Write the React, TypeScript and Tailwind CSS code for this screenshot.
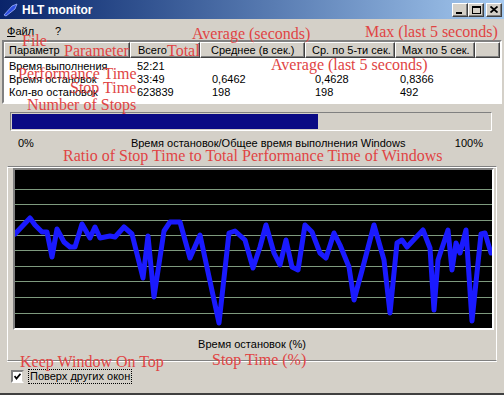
import React from 'react';

// trace of the stop-time graph, in window pixels
const trace: [number, number][] = [
  [13, 234], [28, 218], [33, 225], [40, 232], [45, 232], [50, 257], [55, 229], [62, 242],
  [68, 247], [73, 247], [80, 224], [88, 238], [93, 227], [98, 238], [108, 236], [113, 237],
  [122, 227], [130, 234], [141, 278], [146, 236], [152, 297], [162, 231], [168, 222],
  [178, 222], [188, 258], [198, 235], [217, 323], [227, 233], [233, 231], [243, 240],
  [251, 268], [258, 247], [264, 225], [272, 253], [278, 265], [284, 240], [290, 267],
  [296, 270], [303, 225], [310, 232], [318, 253], [324, 258], [332, 233], [338, 245],
  [347, 267], [352, 300], [362, 263], [372, 225], [382, 260], [388, 313], [395, 243],
  [400, 240], [405, 247], [421, 230], [428, 248], [432, 310], [436, 260], [446, 230],
  [450, 270], [454, 243], [458, 253], [464, 230], [470, 321], [479, 234], [483, 233],
  [489, 253],
];

const chartPoints = trace.map(([x, y]) => `${x - 13},${y - 170}`).join(' ');
const gridLines = [19, 34, 50, 65, 80, 96, 111, 127, 143];

const columns = [
  { title: 'Параметр', w: 'w-[126px]', pl: 'pl-[4px]' },
  { title: 'Всего', w: 'w-[70px]', pl: 'pl-[7px]' },
  { title: 'Среднее (в сек.)', w: 'w-[105px]', pl: 'pl-[10px]' },
  { title: 'Ср. по 5-ти сек.', w: 'w-[90px]', pl: 'pl-[6px]' },
  { title: 'Max по 5 сек.', w: 'w-[80px]', pl: 'pl-[6px]' },
];

const rows = [
  ['Время выполнения', '52:21', '', '', ''],
  ['Время остановок', '33:49', '0,6462', '0,4628', '0,8366'],
  ['Кол-во остановок', '623839', '198', '198', '492'],
];

const rowPads = ['pl-[5px]', 'pl-[7px]', 'pl-[12px]', 'pl-[10px]', 'pl-[5px]'];

const raised =
  'bg-[#d4d0c8] border border-t-white border-l-white border-r-[#404040] border-b-[#404040] shadow-[inset_-1px_-1px_#808080]';

const notes = [
  { text: 'File', cls: 'left-[22px] top-[33px]' },
  { text: 'Average (seconds)', cls: 'left-[192px] top-[26px] text-[15px]' },
  { text: 'Max (last 5 seconds)', cls: 'left-[365px] top-[24px] text-[15.5px]' },
  { text: 'Parameter', cls: 'left-[64px] top-[43px]' },
  { text: 'Total', cls: 'left-[167px] top-[43px] text-[14.5px]' },
  { text: 'Average (last 5 seconds)', cls: 'left-[271px] top-[57px]' },
  { text: 'Performance Time', cls: 'left-[18px] top-[66px] text-[15px]' },
  { text: 'Stop Time', cls: 'left-[70px] top-[80px]' },
  { text: 'Number of Stops', cls: 'left-[27px] top-[97px]' },
  { text: 'Ratio of Stop Time to Total Performance Time of Windows', cls: 'left-[63px] top-[148px]' },
  { text: 'Keep Window On Top', cls: 'left-[20px] top-[354px]' },
  { text: 'Stop Time (%)', cls: 'left-[212px] top-[352px]' },
];

const TitleButton: React.FC<{ kind: 'min' | 'max' | 'close' }> = ({ kind }) => (
  <div className={`${raised} w-[16px] h-[14px] flex items-center justify-center`}>
    {kind === 'min' && <div className="w-[6px] h-[2px] bg-black mt-[6px] mr-[2px]" />}
    {kind === 'max' && <div className="w-[9px] h-[8px] border border-black border-t-2" />}
    {kind === 'close' && (
      <svg width="8" height="7" viewBox="0 0 8 7">
        <path d="M0.5 0.5 L7.5 6.5 M7.5 0.5 L0.5 6.5" stroke="black" strokeWidth="1.8" />
      </svg>
    )}
  </div>
);

export default function App() {
  return (
    <div className="relative w-[504px] h-[395px] overflow-hidden bg-[#d4d0c8] font-['Liberation_Sans',Arial,sans-serif] text-[11px] text-black border-b-2 border-b-[#404040]">
      {/* title bar */}
      <div className="h-[19px] bg-linear-to-r from-[#0a246a] to-[#a6caf0] flex items-center pl-[3px] pr-[2px]">
        <svg width="16" height="14" viewBox="0 0 16 14" className="mr-[3px]">
          <path d="M1 12 L9 3 L14 1 L12 6 L3 13 Z" fill="#2f4fe0" stroke="#9fb4ff" strokeWidth="0.8" />
        </svg>
        <span className="text-white font-bold text-[12px] leading-none">HLT monitor</span>
        <div className="ml-auto flex items-center">
          <TitleButton kind="min" />
          <TitleButton kind="max" />
          <div className="w-[2px]" />
          <TitleButton kind="close" />
        </div>
      </div>

      {/* menu */}
      <div className="h-[21px] flex items-center gap-[21px] pl-[7px] pt-[3px]">
        <span>
          <span className="underline">Ф</span>айл
        </span>
        <span>?</span>
      </div>

      {/* list view */}
      <div className="mx-[2px] h-[64px] bg-white border-2 border-t-[#808080] border-l-[#808080] border-b-white border-r-white">
        <div className="flex h-[16px]">
          {columns.map((c) => (
            <div key={c.title} className={`${raised} ${c.w} ${c.pl} h-full flex items-center whitespace-nowrap`}>
              {c.title}
            </div>
          ))}
          <div className={`${raised} flex-1 h-full`} />
        </div>
        <div className="pt-[2px]">
          {rows.map((r) => (
            <div key={r[0]} className="flex h-[13px] leading-[13px]">
              {r.map((cell, i) => (
                <div key={i} className={`${columns[i].w} ${rowPads[i]} whitespace-nowrap`}>
                  {cell}
                </div>
              ))}
            </div>
          ))}
        </div>
      </div>

      {/* ratio bar */}
      <div className="ml-[10px] mt-[8px] w-[482px] h-[19px] border border-t-[#808080] border-l-[#808080] border-b-white border-r-white p-[1px]">
        <div className="h-full w-[306px] bg-[#0a0a84]" />
      </div>
      <div className="h-[14px] mt-[5px] flex items-center pr-[21px]">
        <span className="ml-[18px]">0%</span>
        <span className="ml-[97px]">Время остановок/Общее время выполнения Windows</span>
        <span className="ml-auto">100%</span>
      </div>

      {/* graph group */}
      <div className="mx-[7px] mt-[16px] h-[195px] border border-t-[#808080] border-l-white border-r-white border-b-[#808080] shadow-[inset_0_1px_#fff,0_1px_#fff] flex flex-col items-center">
        <div className="mt-[1px] ml-[3px] w-[481px] h-[162px] border-2 border-t-[#808080] border-l-[#808080] border-b-white border-r-white bg-black">
          <svg width="477" height="158" viewBox="0 0 477 158" className="block">
            {gridLines.map((y) => (
              <line key={y} x1="0" x2="477" y1={y + 0.5} y2={y + 0.5} stroke="#7e9a7e" strokeWidth="1" />
            ))}
            <polyline
              points={chartPoints}
              fill="none"
              stroke="#1a1aff"
              strokeWidth="5"
              strokeLinejoin="round"
              strokeLinecap="round"
            />
          </svg>
        </div>
        <div className="mt-[7px] leading-[14px]">Время остановок (%)</div>
      </div>

      {/* keep on top */}
      <div className="mt-[7px] h-[16px] flex items-center pl-[11px]">
        <div className="w-[13px] h-[13px] bg-white border-2 border-t-[#808080] border-l-[#808080] border-b-white border-r-[#d4d0c8] flex items-center justify-center">
          <svg width="7" height="7" viewBox="0 0 7 7">
            <path d="M0.5 3 L2.5 5.5 L6.5 0.8" fill="none" stroke="black" strokeWidth="1.8" />
          </svg>
        </div>
        <span className="ml-[4px] px-[1px] h-[15px] leading-[13px] border border-dotted border-black">Поверх других окон</span>
      </div>

      {/* red translation notes */}
      {notes.map((n) => (
        <span
          key={n.text}
          className={`absolute whitespace-nowrap leading-none text-[16px] text-[#e04444] font-['Liberation_Serif','Times_New_Roman',serif] ${n.cls}`}
        >
          {n.text}
        </span>
      ))}
    </div>
  );
}
